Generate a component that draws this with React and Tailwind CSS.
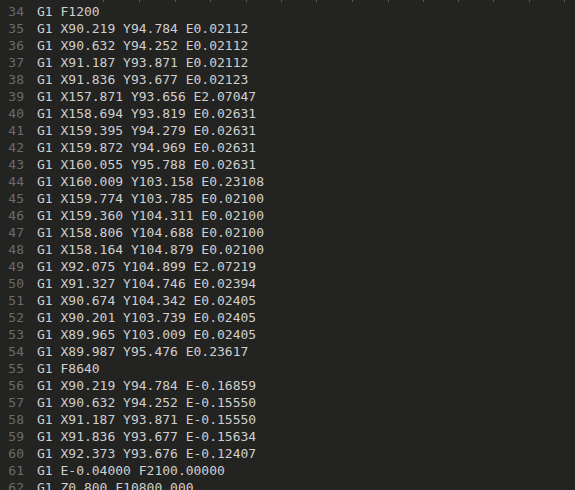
import React from "react";

const lines = [
  "G1 F1200",
  "G1 X90.219 Y94.784 E0.02112",
  "G1 X90.632 Y94.252 E0.02112",
  "G1 X91.187 Y93.871 E0.02112",
  "G1 X91.836 Y93.677 E0.02123",
  "G1 X157.871 Y93.656 E2.07047",
  "G1 X158.694 Y93.819 E0.02631",
  "G1 X159.395 Y94.279 E0.02631",
  "G1 X159.872 Y94.969 E0.02631",
  "G1 X160.055 Y95.788 E0.02631",
  "G1 X160.009 Y103.158 E0.23108",
  "G1 X159.774 Y103.785 E0.02100",
  "G1 X159.360 Y104.311 E0.02100",
  "G1 X158.806 Y104.688 E0.02100",
  "G1 X158.164 Y104.879 E0.02100",
  "G1 X92.075 Y104.899 E2.07219",
  "G1 X91.327 Y104.746 E0.02394",
  "G1 X90.674 Y104.342 E0.02405",
  "G1 X90.201 Y103.739 E0.02405",
  "G1 X89.965 Y103.009 E0.02405",
  "G1 X89.987 Y95.476 E0.23617",
  "G1 F8640",
  "G1 X90.219 Y94.784 E-0.16859",
  "G1 X90.632 Y94.252 E-0.15550",
  "G1 X91.187 Y93.871 E-0.15550",
  "G1 X91.836 Y93.677 E-0.15634",
  "G1 X92.373 Y93.676 E-0.12407",
  "G1 E-0.04000 F2100.00000",
  "G1 Z0.800 F10800.000",
];

const ticks = [103, 139, 175, 210, 246, 281, 316, 352, 388, 423, 458, 493, 529, 564];

const App = () => {
  return (
    <div className="relative h-[490px] w-[575px] overflow-hidden bg-[#232322] font-['DejaVu_Sans_Mono',monospace] text-[13px]">
      {/* ruler ticks left over from the line above */}
      {ticks.map((x) => (
        <div key={x} className="absolute top-0 h-[2px] w-px bg-[#5a5a5a]" style={{ left: x }} />
      ))}
      <div className="flex flex-col pt-[3px]">
        {lines.map((text, i) => (
          <div key={i} className="flex h-[17px] items-center leading-[17px]">
            <span className="w-[24px] text-right text-[#6b6b6b]">{34 + i}</span>
            <span className="ml-[13px] whitespace-pre text-[#cfcfcf]">{text}</span>
          </div>
        ))}
      </div>
    </div>
  );
};

export default App;
